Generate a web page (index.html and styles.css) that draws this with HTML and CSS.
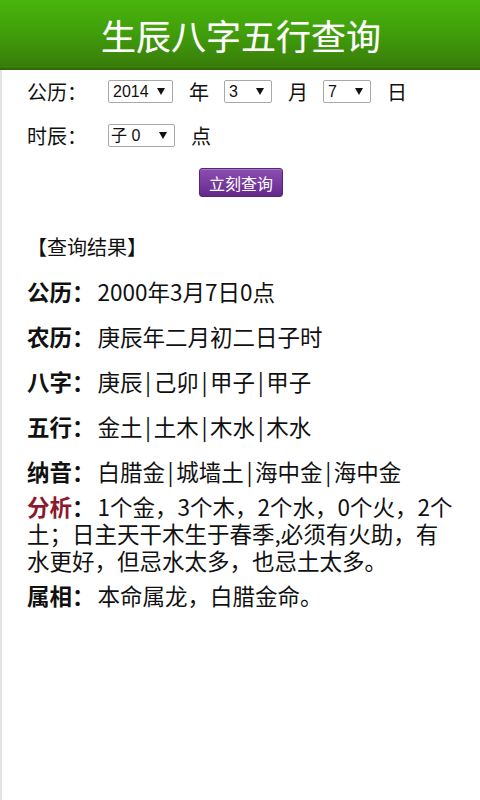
FILE: index.html
```html
<!DOCTYPE html>
<html lang="zh-CN">
<head>
<meta charset="utf-8">
<title>生辰八字五行查询</title>
<link rel="stylesheet" href="styles.css">
</head>
<body>
<header class="header"><h1 class="title">生辰八字五行查询</h1></header>
<main class="main">
  <form class="form">
    <div class="row row-first">
      <span class="label">公历：</span>
      <select class="sel sel-year"><option>2014</option></select>
      <span class="unit">年</span>
      <select class="sel sel-small"><option>3</option></select>
      <span class="unit">月</span>
      <select class="sel sel-small"><option>7</option></select>
      <span class="unit">日</span>
    </div>
    <div class="row">
      <span class="label">时辰：</span>
      <select class="sel sel-hour"><option>子 0</option></select>
      <span class="unit">点</span>
    </div>
    <button type="button" class="btn">立刻查询</button>
  </form>
  <section class="result">
    <div class="res-title">【查询结果】</div>
    <div class="item"><b class="key">公历：</b>2000年3月7日0点</div>
    <div class="item"><b class="key">农历：</b>庚辰年二月初二日子时</div>
    <div class="item"><b class="key">八字：</b>庚辰<span class="bar">|</span>己卯<span class="bar">|</span>甲子<span class="bar">|</span>甲子</div>
    <div class="item"><b class="key">五行：</b>金土<span class="bar">|</span>土木<span class="bar">|</span>木水<span class="bar">|</span>木水</div>
    <div class="item"><b class="key">纳音：</b>白腊金<span class="bar">|</span>城墙土<span class="bar">|</span>海中金<span class="bar">|</span>海中金</div>
    <div class="item item-analysis"><b class="key"><span class="key-red">分析</span>：</b>1个金，3个木，2个水，0个火，2个土；日主天干木生于春季,必须有火助，有水更好，但忌水太多，也忌土太多。</div>
    <div class="item item-zodiac"><b class="key">属相：</b>本命属龙，白腊金命。</div>
  </section>
</main>
</body>
</html>
```
FILE: styles.css
```css
html, body {
  margin: 0;
  padding: 0;
  background: #fff;
}
body {
  font-family: "Noto Sans CJK SC", "Liberation Sans", sans-serif;
  color: #111;
}
.header {
  height: 70px;
  box-sizing: border-box;
  background: linear-gradient(to bottom, #49b40b 0%, #41a00b 45%, #387c0a 100%);
  border-bottom: 2px solid #2f6a08;
  display: flex;
  align-items: center;
  justify-content: center;
}
.title {
  margin: 0;
  font-size: 35px;
  font-weight: normal;
  color: #fff;
  line-height: 1;
  padding-left: 2px;
  text-shadow: 0 0 1px rgba(255,255,255,0.4);
}
.main {
  min-height: 730px;
  box-sizing: border-box;
  border-left: 2px solid #e4e4e4;
  padding: 0 25px 0 25px;
}
.form {
  margin: 0;
}
.row {
  display: flex;
  align-items: center;
  height: 45px;
  font-size: 20px;
  color: #111;
}
.row-first {
  height: 43px;
}
.label {
  width: 81px;
  flex: none;
  white-space: nowrap;
}
.unit {
  margin: 0 15px 0 16px;
}
.sel {
  -webkit-appearance: none;
  appearance: none;
  height: 23px;
  box-sizing: border-box;
  border: 1px solid #a9a9a9;
  border-radius: 2px;
  background: #fff url("data:image/svg+xml,%3Csvg xmlns='http://www.w3.org/2000/svg' width='8' height='7'%3E%3Cpath d='M0 0h8L4 7z' fill='%23111'/%3E%3C/svg%3E") no-repeat right 7px center;
  font-family: "Liberation Sans", "Noto Sans CJK SC", sans-serif;
  font-size: 16px;
  color: #111;
  padding: 0 0 0 4px;
  margin: 0;
}
.sel-year { width: 65px; }
.sel-small { width: 48px; }
.sel-hour { width: 67px; padding-left: 2px; }
.btn {
  display: block;
  margin: 10px auto 0;
  width: 84px;
  height: 29px;
  box-sizing: border-box;
  border: 1px solid #56266f;
  border-radius: 3px;
  background: linear-gradient(to bottom, #8a4cb0 0%, #7a3ca0 50%, #64288a 100%);
  box-shadow: inset 0 1px 0 rgba(255,255,255,0.25);
  color: #fff;
  font-family: "Noto Sans CJK SC", sans-serif;
  font-size: 16px;
  line-height: 1;
  padding: 0;
}
.result {
  margin-top: 36px;
  color: #111;
}
.res-title {
  font-size: 20px;
  line-height: 27px;
}
.item {
  font-size: 22.5px;
  line-height: 27px;
  margin-top: 18px;
}
.key {
  font-weight: bold;
  margin-right: 3px;
}
.key-red {
  color: #8a1a2c;
}
.bar {
  display: inline-block;
  width: 0.5em;
  text-align: center;
}
.item-analysis {
  margin-top: 8px;
}
.item-zodiac {
  margin-top: 8px;
}
```
